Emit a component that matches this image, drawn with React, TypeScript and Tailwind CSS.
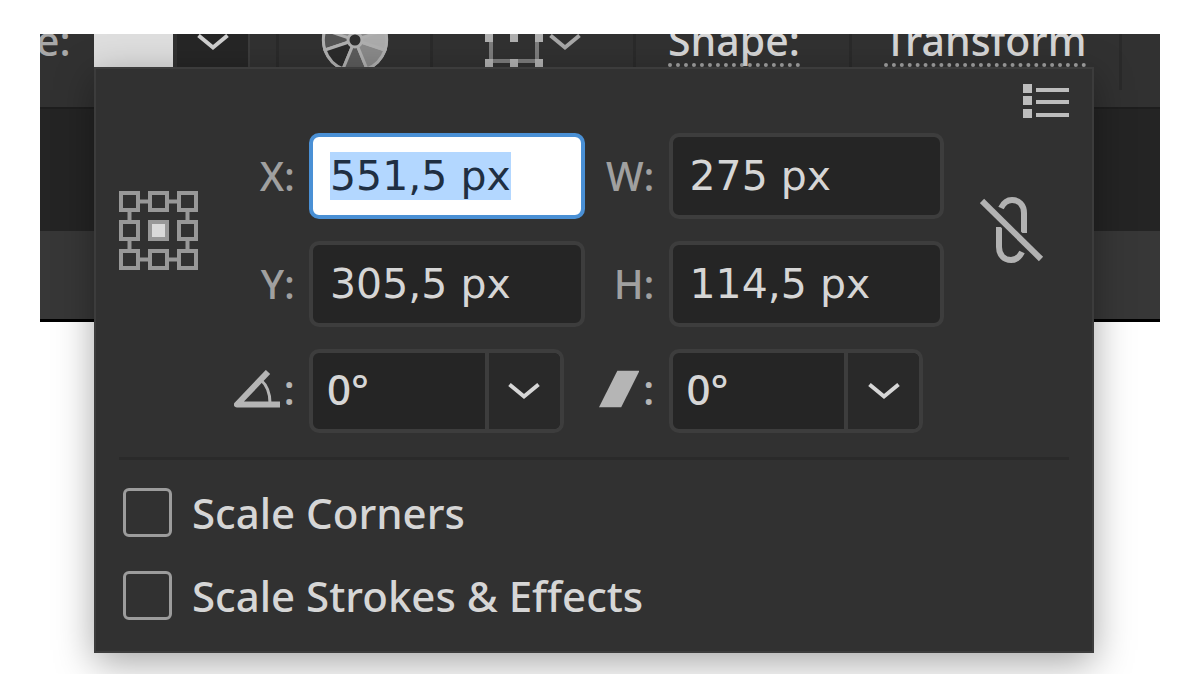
import { useEffect, useRef, useState } from 'react';
import type { ReactNode } from 'react';

interface NumberFieldProps {
  id: string;
  label: string;
  initial: string;
  selected?: boolean;
}

function NumberField({ id, label, initial, selected }: NumberFieldProps) {
  const ref = useRef<HTMLInputElement>(null);
  const [value, setValue] = useState(initial);

  useEffect(() => {
    if (selected) {
      ref.current?.focus();
      ref.current?.select();
    }
  }, [selected]);

  return (
    <>
      <label htmlFor={id} className="text-right text-[40px] text-[#a0a0a0]">
        {label}
      </label>
      <input
        ref={ref}
        id={id}
        type="text"
        value={value}
        onChange={(e) => setValue(e.target.value)}
        className="h-[86px] w-full min-w-0 rounded-[10px] border-4 border-[#3d3d3d] bg-[#252525] px-[17px] font-['DejaVu_Sans',sans-serif] text-[41px] leading-[52px] text-[#d6d6d6] outline-none selection:bg-[#b3d7ff] selection:text-[#1f2f42] focus:border-[#4a90d5] focus:bg-white focus:text-[#1f2f42]"
      />
    </>
  );
}

interface AngleFieldProps {
  id: string;
  name: string;
  icon: ReactNode;
}

function AngleField({ id, name, icon }: AngleFieldProps) {
  const [value, setValue] = useState('0°');

  return (
    <>
      <label htmlFor={id} className="flex items-center justify-end gap-1 pb-1 text-[#b5b5b5]">
        {icon}
        <span>:</span>
      </label>
      <div className="mr-[21px] flex h-[84px] overflow-hidden rounded-[10px] border-4 border-[#3d3d3d] bg-[#252525]">
        <input
          id={id}
          type="text"
          aria-label={name}
          value={value}
          onChange={(e) => setValue(e.target.value)}
          className="w-full min-w-0 flex-1 bg-transparent px-[14px] pb-1 text-[#d6d6d6] outline-none"
        />
        <button
          type="button"
          aria-label={`${name} presets`}
          className="flex w-[75px] shrink-0 items-center justify-center border-l-4 border-[#3d3d3d] bg-[#292929] text-[#d6d6d6]"
        >
          <Chevron />
        </button>
      </div>
    </>
  );
}

function Chevron() {
  return (
    <svg width="32" height="18" viewBox="0 0 32 18" fill="none" stroke="currentColor" strokeWidth="4">
      <path d="M1.500 2.500 16 14.500 30.500 2.500" />
    </svg>
  );
}

function ColorWheelIcon() {
  return (
    <svg width="68" height="68" viewBox="0 0 68 68" stroke="#b0b0b0" strokeWidth="3">
      <circle cx="34" cy="34" r="31.5" fill="#8c8c8c" />
      <path d="M34 34 4 44A31.5 31.5 0 0 1 4 24Z" fill="#555" />
      <path d="M34 34 22 63A31.5 31.5 0 0 1 4 44Z" fill="#2b2b2b" />
      <path d="M34 34 46 63A31.5 31.5 0 0 1 22 63Z" fill="#5c5c5c" />
      <path d="M34 34 64 44A31.5 31.5 0 0 1 46 63Z" fill="#8a8a8a" />
      <path d="M34 34 64 24A31.5 31.5 0 0 1 64 44Z" fill="#acacac" />
      <circle cx="34" cy="34" r="7" fill="#303030" />
    </svg>
  );
}

function BoundingBoxIcon() {
  const squares = [0, 25, 50];
  return (
    <svg width="58" height="57" viewBox="0 0 58 57" fill="#b0b0b0">
      <rect x="6" y="6" width="46" height="45" fill="none" stroke="#7c7c7c" strokeWidth="4" />
      {squares.map((x) => (
        <g key={x}>
          <rect x={x} y="24" width="8" height="8" />
          <rect x={x} y="49" width="8" height="8" />
        </g>
      ))}
    </svg>
  );
}

function ReferencePointIcon() {
  const steps = [2, 31, 60];
  return (
    <svg width="79" height="79" viewBox="0 0 79 79" fill="none" stroke="#989898" strokeWidth="4">
      <path d="M10.5 10.5H68.5V68.5H10.5Z" />
      {steps.map((y) =>
        steps.map((x) => (
          <rect
            key={`${x}-${y}`}
            x={x}
            y={y}
            width="17"
            height="17"
            fill={x === 31 && y === 31 ? '#dadada' : '#313131'}
          />
        ))
      )}
    </svg>
  );
}

function UnlinkIcon() {
  return (
    <svg width="64" height="68" viewBox="0 0 64 68" fill="none" stroke="#b2b2b2">
      <path d="M21 12Q25 4 32 4C39 4 44 9 44 17V37" strokeWidth="6" />
      <path d="M19 31V51C19 59 24 64 31 64Q38 64 42 56" strokeWidth="6" />
      <path d="M2 5 61 63" stroke="#313131" strokeWidth="11" />
      <path d="M2 5 61 63" strokeWidth="6" />
    </svg>
  );
}

function AngleIcon() {
  return (
    <svg width="46" height="38" viewBox="0 0 46 38" fill="none" stroke="#b5b5b5">
      <path d="M34 2 3 34.500H46" strokeWidth="6" strokeLinejoin="round" />
      <path d="M27 10Q36 18 36 33" strokeWidth="3" />
    </svg>
  );
}

function ShearIcon() {
  return (
    <svg width="42" height="38" viewBox="0 0 42 38" fill="#b5b5b5">
      <path d="M19 0H42L23 38H0Z" />
    </svg>
  );
}

function MenuIcon() {
  return (
    <svg width="46" height="34" viewBox="0 0 46 34" fill="#bdbdbd">
      {[0, 12, 25].map((y) => (
        <g key={y}>
          <rect y={y} width="9" height="9" />
          <rect x="13" y={y + 4} width="33" height="4" />
        </g>
      ))}
    </svg>
  );
}

function Divider() {
  return <div className="h-20 w-[3px] shrink-0 bg-[#2a2a2a]" />;
}

function ControlBar() {
  return (
    <div className="flex h-[75px] flex-col overflow-hidden border-b-2 border-[#1e1e1e] bg-[#313131]">
      <div className="-mt-6 flex h-20 items-start">
        <div className="-ml-1 flex w-[58px] shrink-0 justify-start">
          <span className="text-[41px] leading-[60px] text-[#a8a8a8]">e:</span>
        </div>
        <div className="h-[57px] w-[79px] shrink-0 bg-[#dedede]" />
        <button
          type="button"
          aria-label="Stroke options"
          className="ml-1 flex h-[57px] w-[73px] shrink-0 items-end justify-center border-r-2 border-[#3c3c3c] bg-[#262626] pb-4 text-[#d0d0d0]"
        >
          <Chevron />
        </button>
        <div className="w-[26px] shrink-0" />
        <Divider />
        <div className="-mt-1 flex w-[151px] shrink-0 justify-center">
          <ColorWheelIcon />
        </div>
        <Divider />
        <button
          type="button"
          aria-label="Align"
          className="flex w-[200px] shrink-0 items-end justify-center gap-[6px] text-[#a8a8a8]"
        >
          <BoundingBoxIcon />
          <span className="pb-4">
            <Chevron />
          </span>
        </button>
        <Divider />
        <div className="w-[213px] shrink-0 pl-8">
          <BarLink>Shape:</BarLink>
        </div>
        <Divider />
        <div className="flex-1 pl-8">
          <BarLink>Transform</BarLink>
        </div>
        <Divider />
        <div className="w-[38px] shrink-0" />
      </div>
    </div>
  );
}

function BarLink({ children }: { children: ReactNode }) {
  return (
    <a
      href="#"
      className="inline-block h-[57px] border-b-4 border-dotted border-[#a0a0a0] text-[41px] leading-[60px] text-[#d6d6d6]"
    >
      {children}
    </a>
  );
}

function TransformPanel() {
  return (
    <section className="flex flex-col border-2 border-[#3c3c3c] bg-[#313131] px-[23px] pt-[15px] pb-[31px] shadow-[0_10px_36px_rgba(0,0,0,0.35)]">
      <button type="button" aria-label="Panel menu" className="self-end">
        <MenuIcon />
      </button>

      <div className="mt-[15px] grid grid-cols-[79px_83px_1fr_56px_1fr_111px] items-center gap-x-[14px] gap-y-[22px]">
        <button type="button" aria-label="Reference point" className="row-span-2">
          <ReferencePointIcon />
        </button>
        <NumberField id="x" label="X:" initial="551,5 px" selected />
        <NumberField id="w" label="W:" initial="275 px" />
        <button type="button" aria-label="Constrain proportions" className="row-span-2 pl-[22px]">
          <UnlinkIcon />
        </button>
        <NumberField id="y" label="Y:" initial="305,5 px" />
        <NumberField id="h" label="H:" initial="114,5 px" />
        <div />
        <AngleField id="rotate" name="Rotate" icon={<AngleIcon />} />
        <AngleField id="shear" name="Shear" icon={<ShearIcon />} />
      </div>

      <hr className="mt-6 border-t-[3px] border-[#2a2a2a]" />

      <div className="mt-7 flex flex-col gap-[34px] pl-1">
        <CheckRow label="Scale Corners" />
        <CheckRow label="Scale Strokes & Effects" />
      </div>
    </section>
  );
}

function CheckRow({ label }: { label: string }) {
  return (
    <label className="flex h-[49px] items-center gap-5 text-[#d6d6d6]">
      <input
        type="checkbox"
        className="h-[49px] w-[49px] shrink-0 appearance-none rounded-md border-[3px] border-[#9c9c9c] checked:bg-[#4a90d5]"
      />
      {label}
    </label>
  );
}

export default function App() {
  return (
    <div className="min-h-screen bg-white px-10 pt-[34px] font-['Noto_Sans',sans-serif] text-[42px] leading-[48px] font-medium">
      <div className="grid overflow-hidden">
        <div className="col-start-1 row-start-1">
          <ControlBar />
          <div className="h-[122px] bg-[#242424]" />
          <div className="h-[91px] border-b-[3px] border-black bg-[#373737]" />
        </div>
        <div className="z-10 col-start-1 row-start-1 mt-[33px] mr-[66px] ml-[54px] pb-[21px]">
          <TransformPanel />
        </div>
      </div>
    </div>
  );
}
